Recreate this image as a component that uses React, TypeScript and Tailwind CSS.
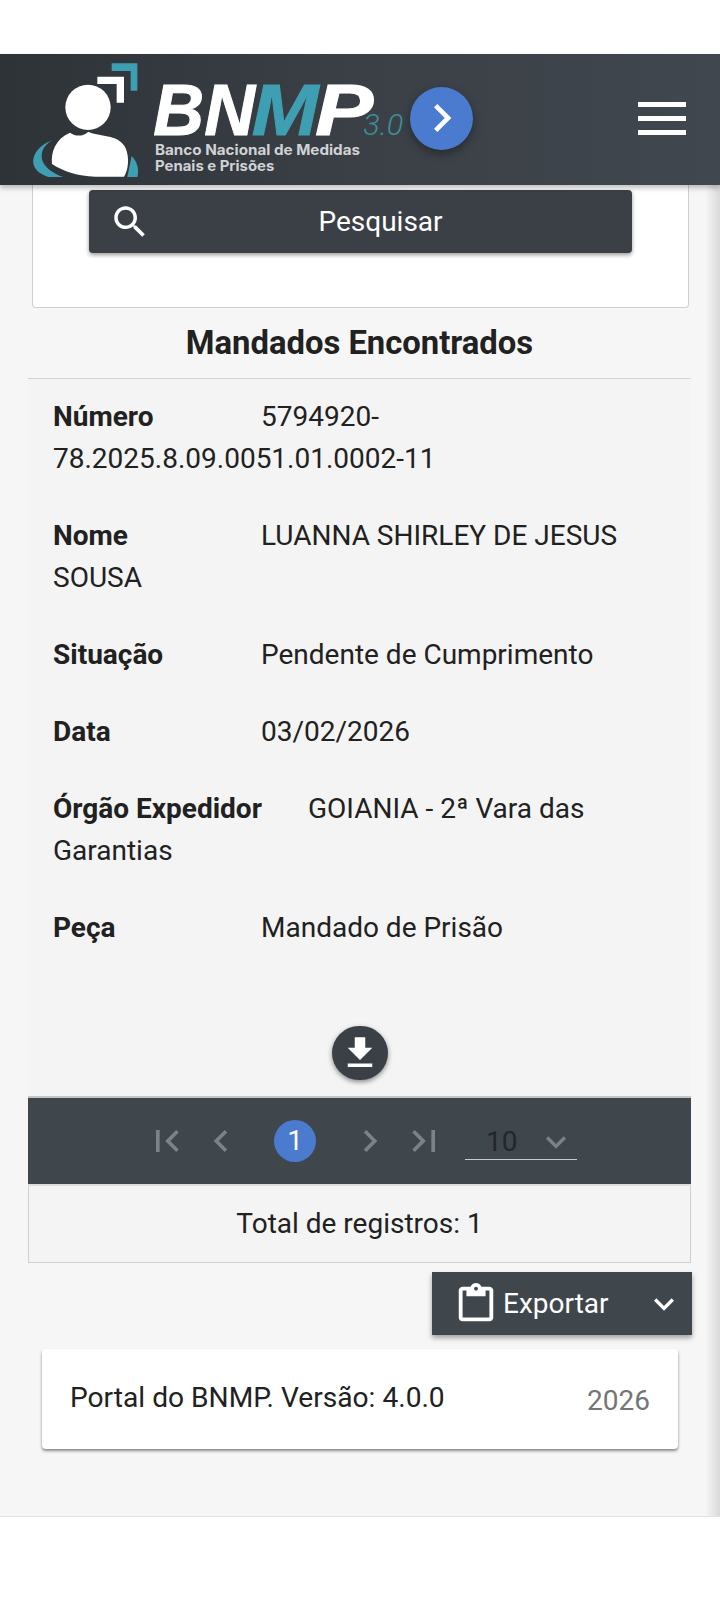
const P = {
  search: "M15.5 14h-.79l-.28-.27C15.41 12.59 16 11.11 16 9.5 16 5.91 13.09 3 9.5 3S3 5.91 3 9.5 5.91 16 9.5 16c1.61 0 3.09-.59 4.23-1.57l.27.28v.79l5 4.99L20.49 19l-4.99-5zm-6 0C7.01 14 5 11.99 5 9.5S7.01 5 9.5 5 14 7.01 14 9.5 11.99 14 9.5 14z",
  download: "M19 9h-4V3H9v6H5l7 7 7-7zM5 18v2h14v-2H5z",
  paste: "M19 3h-4.18C14.4 1.84 13.3 1 12 1c-1.3 0-2.4.84-2.82 2H5c-1.1 0-2 .9-2 2v14c0 1.1.9 2 2 2h14c1.1 0 2-.9 2-2V5c0-1.1-.9-2-2-2zm-7 0c.55 0 1 .45 1 1s-.45 1-1 1-1-.45-1-1 .45-1 1-1zm7 16H5V5h2v3h10V5h2v14z",
  first: "M18.41 16.59L13.82 12l4.59-4.59L17 6l-6 6 6 6zM6 6h2v12H6z",
  prev: "M15.41 7.41L14 6l-6 6 6 6 1.41-1.41L10.83 12z",
  next: "M10 6L8.59 7.41 13.17 12l-4.58 4.59L10 18l6-6z",
  last: "M5.59 7.41L10.18 12l-4.59 4.59L7 18l6-6-6-6zM16 6h2v12h-2z",
  more: "M16.59 8.59L12 13.17 7.41 8.59 6 10l6 6 6-6z",
};

function Icon({ d, className }: { d: string; className: string }) {
  return (
    <svg viewBox="0 0 24 24" className={className} fill="currentColor">
      <path d={d} />
    </svg>
  );
}

function Logo() {
  const big = {
    y: 255,
    fontFamily: "'Liberation Sans', sans-serif",
    fontWeight: 700,
    fontStyle: "italic",
    fontSize: 219,
    lengthAdjust: "spacingAndGlyphs",
    strokeWidth: 3,
  };
  return (
    <svg viewBox="0 12 1200 393" className="w-[400px] h-[131px] shrink-0">
      <path d="M275 40H352V122H332V63H275Z" fill="#3f9fb2" />
      <path d="M232 80H312V158H290V102H232Z" fill="#ffffff" />
      <path d="M98 270C72 284 62 305 66 328C72 352 100 372 130 381H85C50 370 28 345 46 310C58 290 78 277 98 270Z" fill="#3f9fb2" />
      <path d="M335 318C352 335 358 360 352 381H322Z" fill="#3f9fb2" />
      <ellipse cx="204" cy="172" rx="68" ry="68" fill="#ffffff" />
      <path d="M205 245C240 262 290 250 315 290C330 320 325 360 312 380H225C175 378 130 365 96 342C92 305 108 265 150 248C170 262 190 258 205 245Z" fill="#ffffff" />
      <text {...big} x="400" fill="#ffffff" stroke="#ffffff" textLength="305">BN</text>
      <text {...big} x="695" fill="#3f9fb2" stroke="#3f9fb2" textLength="200">M</text>
      <text {...big} x="885" fill="#ffffff" stroke="#ffffff" textLength="175">P</text>
      <text x="1030" y="255" fontFamily="'Roboto', sans-serif" fontWeight="300" fontStyle="italic" fontSize="90" fill="#3f8f9c" textLength="120" lengthAdjust="spacingAndGlyphs">3.0</text>
      <text x="405" y="315" fontFamily="'Inter', sans-serif" fontWeight="700" fontSize="43" fill="#d0d3d5" textLength="615" lengthAdjust="spacingAndGlyphs">Banco Nacional de Medidas</text>
      <text x="405" y="363" fontFamily="'Inter', sans-serif" fontWeight="700" fontSize="43" fill="#d0d3d5" textLength="358" lengthAdjust="spacingAndGlyphs">Penais e Prisões</text>
    </svg>
  );
}

const rows = [
  { label: "Número", value: "5794920-78.2025.8.09.0051.01.0002-11", w: "w-[208px]" },
  { label: "Nome", value: "LUANNA SHIRLEY DE JESUS SOUSA", w: "w-[208px]" },
  { label: "Situação", value: "Pendente de Cumprimento", w: "w-[208px]" },
  { label: "Data", value: "03/02/2026", w: "w-[208px]" },
  { label: "Órgão Expedidor", value: "GOIANIA - 2ª Vara das Garantias", w: "w-[255px]" },
  { label: "Peça", value: "Mandado de Prisão", w: "w-[208px]" },
];

export default function App() {
  return (
    <div className="w-[720px] h-[1600px] bg-white pt-[54px] font-['Roboto',sans-serif] text-[#212121] overflow-hidden">
      <header className="relative z-10 h-[131px] flex items-center bg-gradient-to-r from-[#2e3338] via-[#3a4046] to-[#41474e] shadow-[0_3px_5px_rgba(0,0,0,0.25)]">
        <div className="pl-[20px]">
          <Logo />
        </div>
        <div className="-ml-[10px] -mt-[3px] w-[63px] h-[63px] rounded-full bg-[#4a7bcf] text-white flex items-center justify-center shadow-[0_4px_10px_rgba(0,0,0,0.35)] shrink-0">
          <Icon d={P.next} className="w-[56px] h-[56px]" />
        </div>
        <div className="ml-auto mr-[34px] -mt-[2px] w-[48px] flex flex-col gap-[9px]">
          <div className="h-[5px] bg-white" />
          <div className="h-[5px] bg-white" />
          <div className="h-[5px] bg-white" />
        </div>
      </header>

      <div className="h-[1331px] bg-[#f6f6f6] flex">
        <main className="w-[706px] shrink-0">
          <div className="ml-[32px] mr-[17px] h-[123px] bg-white border border-t-0 border-[#cfcfcf] rounded-b-[4px] pt-[5px] pl-[56px] pr-[56px]">
            <div className="h-[63px] w-[543px] rounded-[4px] bg-[#3a4046] text-white flex items-center shadow-[0_2px_4px_rgba(0,0,0,0.4)]">
              <Icon d={P.search} className="w-[42px] h-[42px] ml-[20px] shrink-0" />
              <span className="flex-1 text-center text-[28px] pr-[22px]">Pesquisar</span>
            </div>
          </div>

          <h2 className="h-[71px] pt-[2px] ml-[28px] w-[663px] flex items-center justify-center font-bold text-[32.8px] border-b border-[#d4d4d4]">
            Mandados Encontrados
          </h2>

          <div className="ml-[28px] w-[663px] h-[717px] bg-[#f4f4f4] pt-[17px]">
            <div className="px-[25px] w-[640px]">
              {rows.map((r) => (
                <p key={r.label} className="text-[28px] leading-[42px] pb-[35px]">
                  <b className={"inline-block font-bold " + r.w}>{r.label}</b>
                  {r.value}
                </p>
              ))}
            </div>
            <div className="mt-[42px] flex justify-center">
              <div className="w-[56px] h-[54px] rounded-full bg-[#3a4046] text-white flex items-center justify-center shadow-[0_2px_5px_rgba(0,0,0,0.45)]">
                <Icon d={P.download} className="w-[42px] h-[42px]" />
              </div>
            </div>
          </div>

          <div className="ml-[28px] w-[663px] h-[90px] bg-[#3f464c] border-t-2 border-b-2 border-t-[#c4c4c4] border-b-[#dcdcdc] flex items-center text-[#7c8288]">
            <Icon d={P.first} className="w-[44px] h-[44px] ml-[117px]" />
            <Icon d={P.prev} className="w-[44px] h-[44px] ml-[10px]" />
            <div className="ml-[31px] w-[42px] h-[42px] rounded-full bg-[#4a7bcf] text-white text-[28px] flex items-center justify-center">1</div>
            <Icon d={P.next} className="w-[44px] h-[44px] ml-[32px]" />
            <Icon d={P.last} className="w-[44px] h-[44px] ml-[10px]" />
            <div className="ml-[19px] -mt-[2px] w-[112px] h-[40px] pt-[4px] border-b border-[#c8cbce] flex items-center">
              <span className="ml-[21px] text-[28px] text-[#23272b]">10</span>
              <Icon d={P.more} className="w-[40px] h-[40px] ml-[19px]" />
            </div>
          </div>

          <div className="ml-[28px] w-[663px] h-[77px] pb-[1px] bg-[#f4f4f4] border border-t-0 border-[#cfcfcf] flex items-center justify-center text-[28px]">
            Total de registros: 1
          </div>

          <div className="mt-[9px] ml-[432px] w-[260px] h-[63px] bg-[#3f464c] text-white flex items-center shadow-[0_3px_5px_rgba(0,0,0,0.35)]">
            <Icon d={P.paste} className="w-[46px] h-[46px] ml-[21px] shrink-0" />
            <span className="ml-[4px] text-[28px]">Exportar</span>
            <Icon d={P.more} className="w-[40px] h-[40px] ml-auto mr-[8px]" />
          </div>

          <div className="mt-[14px] ml-[42px] w-[636px] h-[100px] bg-white rounded-[4px] shadow-[0_2px_3px_rgba(0,0,0,0.45)] flex items-center justify-between pl-[28px] pr-[28px]">
            <span className="text-[28.15px] -mt-[2px]">Portal do BNMP. Versão: 4.0.0</span>
            <span className="text-[28px] text-[#757575] mt-[4px]">2026</span>
          </div>
        </main>
        <div className="flex-1 bg-gradient-to-r from-[#f5f5f5] to-[#d9d9d9]" />
      </div>
      <div className="h-[1px] bg-[#e2e2e2]" />
    </div>
  );
}
